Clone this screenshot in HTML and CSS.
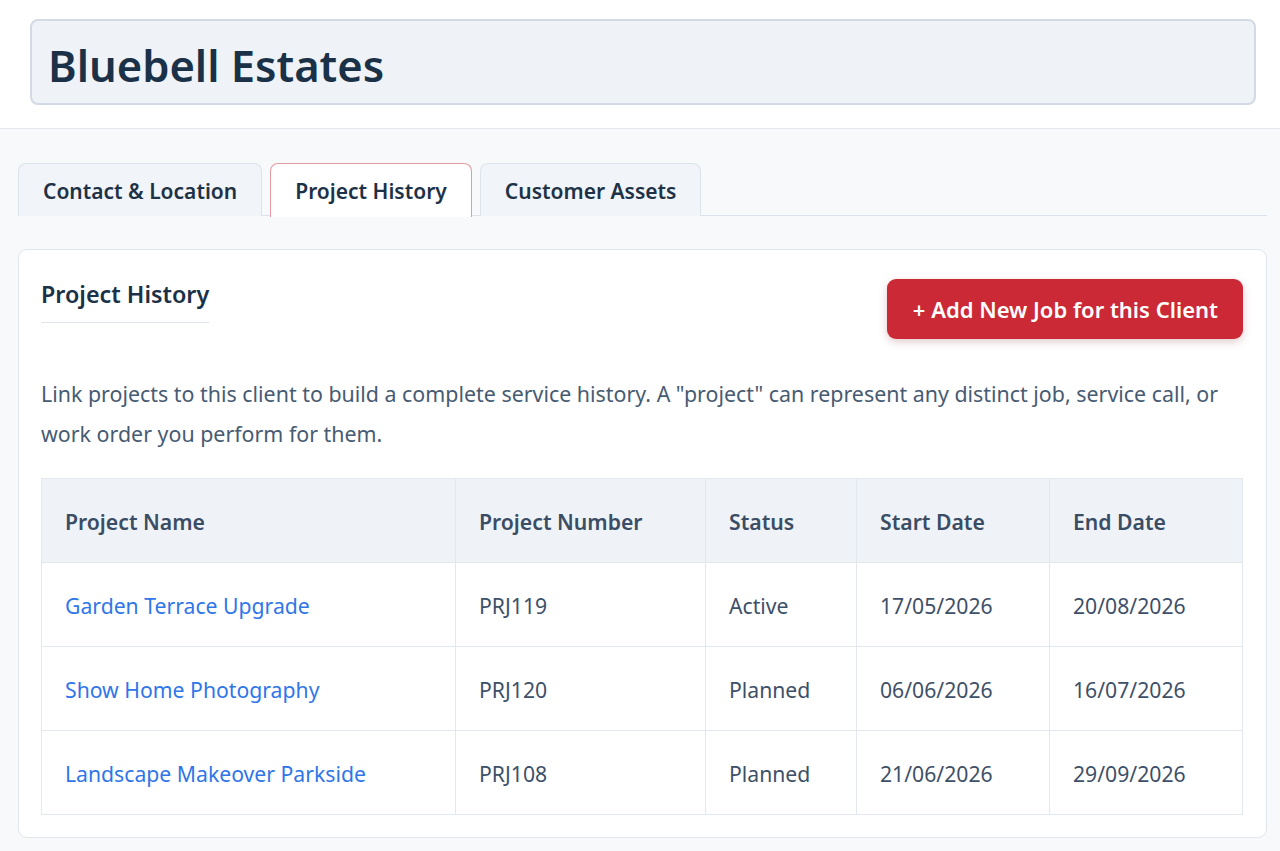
FILE: index.html
```html
<!DOCTYPE html>
<html>
<head>
<meta charset="utf-8">
<link rel="stylesheet" href="styles.css">
</head>
<body>
<header class="top">
  <div class="name-box">Bluebell Estates</div>
</header>
<main class="content">
  <nav class="tabs">
    <div class="tab">Contact &amp; Location</div>
    <div class="tab active">Project History</div>
    <div class="tab">Customer Assets</div>
  </nav>
  <section class="card">
    <div class="card-head">
      <h2 class="card-title">Project History</h2>
      <button class="btn-add">+ Add New Job for this Client</button>
    </div>
    <p class="intro">Link projects to this client to build a complete service history. A "project" can represent any distinct job, service call, or work order you perform for them.</p>
    <table class="projects">
      <colgroup>
        <col class="c1"><col class="c2"><col class="c3"><col class="c4"><col class="c5">
      </colgroup>
      <thead>
        <tr><th>Project Name</th><th>Project Number</th><th>Status</th><th>Start Date</th><th>End Date</th></tr>
      </thead>
      <tbody>
        <tr><td><a class="plink" href="#">Garden Terrace Upgrade</a></td><td>PRJ119</td><td>Active</td><td>17/05/2026</td><td>20/08/2026</td></tr>
        <tr><td><a class="plink" href="#">Show Home Photography</a></td><td>PRJ120</td><td>Planned</td><td>06/06/2026</td><td>16/07/2026</td></tr>
        <tr><td><a class="plink" href="#">Landscape Makeover Parkside</a></td><td>PRJ108</td><td>Planned</td><td>21/06/2026</td><td>29/09/2026</td></tr>
      </tbody>
    </table>
  </section>
</main>
</body>
</html>
```

FILE: styles.css
```css
* { box-sizing: border-box; }
html, body { margin: 0; padding: 0; }
body {
  font-family: "Noto Sans", "Open Sans", sans-serif;
  background: #f7f9fb;
  color: #1e3247;
  height: 851px;
  overflow: hidden;
}
.top {
  background: #ffffff;
  padding: 19px 24px 23px 30px;
  border-bottom: 1px solid #e3e8ef;
  height: 129px;
}
.name-box {
  height: 86px;
  background: #eff2f7;
  border: 2px solid #d3dae5;
  border-radius: 8px;
  padding: 6px 16px 0 16px;
  display: flex;
  align-items: center;
  font-size: 43.5px;
  font-weight: 600;
  color: #1a3147;
}
.content {
  padding: 34px 13px 0 18px;
}
.tabs {
  display: flex;
  gap: 8px;
  border-bottom: 1px solid #dde3ea;
  height: 53px;
}
.tab {
  height: 53px;
  padding: 1px 24px 0 24px;
  display: flex;
  align-items: center;
  font-size: 21px;
  font-weight: 600;
  color: #1e3247;
  background: #f1f4f8;
  border: 1px solid #dde3ea;
  border-bottom: none;
  border-radius: 8px 8px 0 0;
}
.tab.active {
  background: #ffffff;
  border-color: #e49aa2;
  height: 54px;
  padding-top: 0;
}
.card {
  margin-top: 33px;
  background: #ffffff;
  border: 1px solid #e1e6ed;
  border-radius: 9px;
  padding: 28px 23px 22px 22px;
}
.card-head {
  display: flex;
  justify-content: space-between;
  align-items: flex-start;
}
.card-title {
  margin: 0;
  font-size: 23.3px;
  font-weight: 600;
  color: #1a3147;
  padding-bottom: 12px;
  border-bottom: 1px solid #e1e6ed;
  line-height: 32px;
}
.btn-add {
  margin-top: 1px;
  font-family: inherit;
  font-size: 22px;
  font-weight: 600;
  color: #ffffff;
  background: #cc2936;
  border: none;
  border-radius: 9px;
  height: 60px;
  padding: 0 25px 0 26px;
  box-shadow: 0 3px 8px rgba(120, 20, 30, 0.22);
}
.intro {
  margin: 35px 0 24px 0;
  font-size: 21.4px;
  line-height: 40px;
  color: #475b72;
}
.projects {
  width: 100%;
  border-collapse: collapse;
  table-layout: fixed;
  font-size: 21.2px;
}
.c1 { width: 414px; }
.c2 { width: 250px; }
.c3 { width: 151px; }
.c4 { width: 193px; }
.projects th, .projects td {
  border: 1px solid #e3e8ef;
  height: 84px;
  padding: 2px 23px 0 23px;
  text-align: left;
  color: #3d4f66;
}
.projects th {
  background: #eff3f8;
  font-weight: 600;
  color: #3a4d64;
}
.projects td {
  font-weight: 400;
  color: #3e5068;
}
.plink {
  color: #2f76e8;
  text-decoration: none;
}
```
